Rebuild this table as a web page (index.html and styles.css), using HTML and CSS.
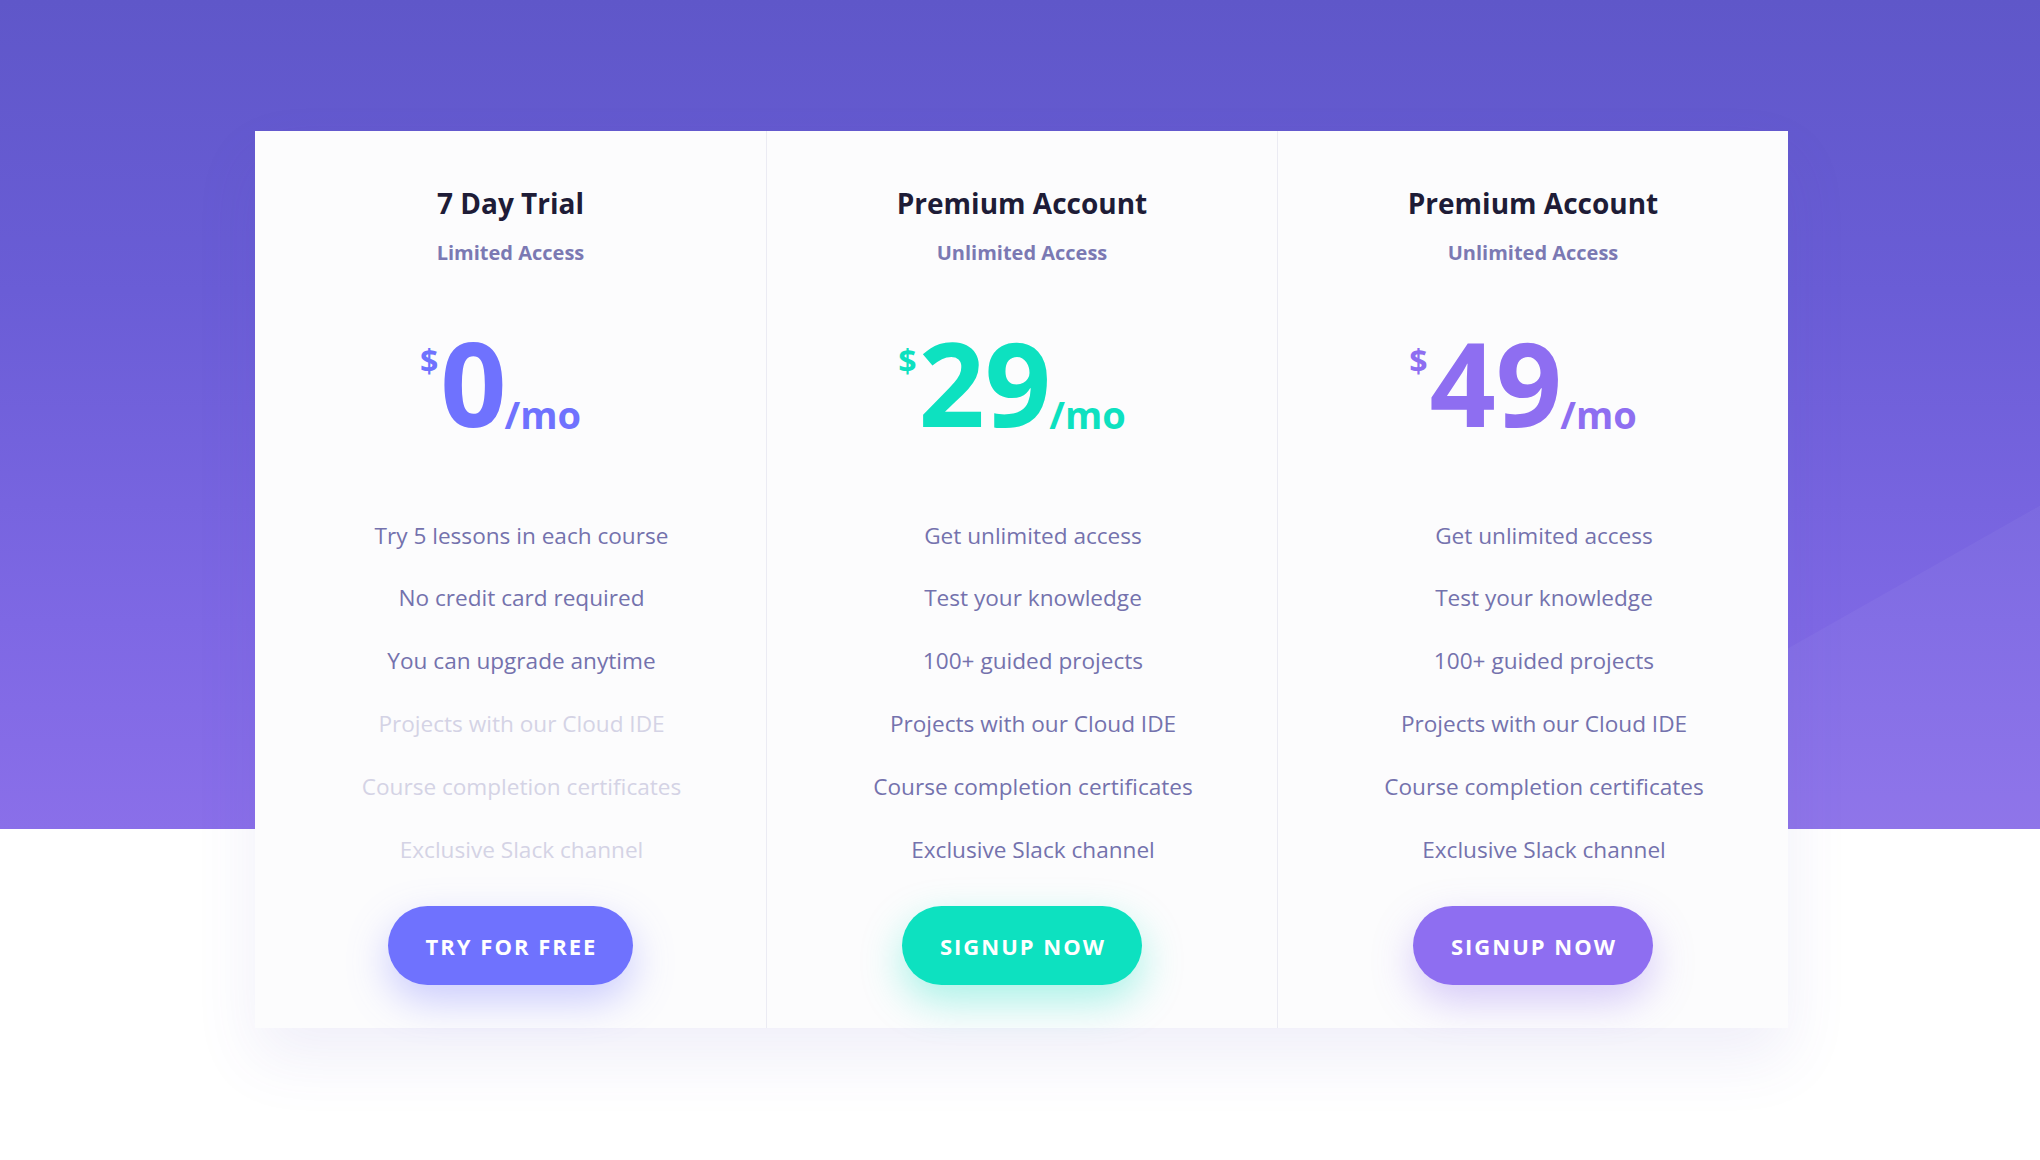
FILE: index.html
```html
<!DOCTYPE html>
<html lang="en">
<head>
<meta charset="utf-8">
<title>Pricing</title>
<link rel="stylesheet" href="styles.css">
</head>
<body>
<div class="hero"></div>
<main class="pricing">
  <section class="plan plan-blue">
    <h2 class="plan-title">7 Day Trial</h2>
    <p class="plan-sub">Limited Access</p>
    <div class="price"><span class="cur">$</span><span class="amt">0</span><span class="per">/mo</span></div>
    <ul class="features">
      <li>Try 5 lessons in each course</li>
      <li>No credit card required</li>
      <li>You can upgrade anytime</li>
      <li class="off">Projects with our Cloud IDE</li>
      <li class="off">Course completion certificates</li>
      <li class="off">Exclusive Slack channel</li>
    </ul>
    <a class="btn" href="#">TRY FOR FREE</a>
  </section>
  <section class="plan plan-teal">
    <h2 class="plan-title">Premium Account</h2>
    <p class="plan-sub">Unlimited Access</p>
    <div class="price"><span class="cur">$</span><span class="amt">29</span><span class="per">/mo</span></div>
    <ul class="features">
      <li>Get unlimited access</li>
      <li>Test your knowledge</li>
      <li>100+ guided projects</li>
      <li>Projects with our Cloud IDE</li>
      <li>Course completion certificates</li>
      <li>Exclusive Slack channel</li>
    </ul>
    <a class="btn" href="#">SIGNUP NOW</a>
  </section>
  <section class="plan plan-purple">
    <h2 class="plan-title">Premium Account</h2>
    <p class="plan-sub">Unlimited Access</p>
    <div class="price"><span class="cur">$</span><span class="amt">49</span><span class="per">/mo</span></div>
    <ul class="features">
      <li>Get unlimited access</li>
      <li>Test your knowledge</li>
      <li>100+ guided projects</li>
      <li>Projects with our Cloud IDE</li>
      <li>Course completion certificates</li>
      <li>Exclusive Slack channel</li>
    </ul>
    <a class="btn" href="#">SIGNUP NOW</a>
  </section>
</main>
</body>
</html>
```
FILE: styles.css
```css
* { box-sizing: border-box; }
html, body { margin: 0; padding: 0; }
body {
  font-family: "Open Sans", "Noto Sans", sans-serif;
  background: #ffffff;
  min-height: 1160px;
  overflow: hidden;
  position: relative;
}
.hero {
  position: absolute;
  left: 0; top: 0; right: 0;
  height: 829px;
  background: linear-gradient(180deg, #5f57c9 0%, #6a5dd6 35%, #7e68e4 75%, #8a6fe9 100%);
  overflow: hidden;
}
.hero::after {
  content: "";
  position: absolute;
  inset: 0;
  background: rgba(255,255,255,0.045);
  clip-path: polygon(72% 100%, 100% 61%, 100% 100%);
}
.pricing {
  position: relative;
  width: 1533px;
  margin: 131px 0 0 255px;
  display: grid;
  grid-template-columns: repeat(3, 1fr);
  background: #fcfcfd;
  box-shadow: 0 30px 60px rgba(90, 80, 190, 0.09);
}
.plan {
  display: flex;
  flex-direction: column;
  align-items: center;
  padding: 56px 0 43px;
  border-left: 1px solid #ebebf3;
}
.plan:first-child { border-left: 0; }
.plan-title {
  margin: 0;
  font-size: 28px;
  line-height: 1.2;
  font-weight: 700;
  color: #1e1c37;
}
.plan-sub {
  margin: 20px 0 0;
  font-size: 20px;
  line-height: 1.2;
  font-weight: 700;
  color: #7b79b3;
}
.price {
  margin-top: 59px;
  padding-right: 20px;
  font-size: 116px;
  line-height: 1;
  font-weight: 700;
  white-space: nowrap;
}
.price .cur {
  font-size: 32px;
  line-height: 1;
  vertical-align: 54px;
  margin-right: 2px;
}
.price .per {
  font-size: 38px;
  line-height: 1;
  vertical-align: -2px;
  margin-left: -2px;
}
.plan-blue .price { color: #6f72fe; }
.plan-teal .price { color: #0de1c0; }
.plan-purple .price { color: #8e6ef1; }
.features {
  list-style: none;
  margin: 81px 0 0;
  padding: 0 0 0 22px;
  display: flex;
  flex-direction: column;
  align-items: center;
  gap: 32px;
}
.features li {
  font-size: 22.6px;
  line-height: 30.8px;
  color: #7472ad;
}
.features li.off { color: #d4d3e5; }
.btn {
  margin-top: 41px;
  height: 79px;
  padding: 0 36px 0 38px;
  border-radius: 40px;
  display: flex;
  align-items: center;
  justify-content: center;
  font-size: 22px;
  font-weight: 700;
  letter-spacing: 2px;
  color: #ffffff;
  text-decoration: none;
}
.plan-blue .btn { background: #6f72fe; box-shadow: 0 16px 40px rgba(111, 114, 254, 0.35); }
.plan-teal .btn { background: #0de1c0; box-shadow: 0 16px 40px rgba(13, 225, 192, 0.35); }
.plan-purple .btn { background: #8e6ef1; box-shadow: 0 16px 40px rgba(142, 110, 241, 0.35); }
```
